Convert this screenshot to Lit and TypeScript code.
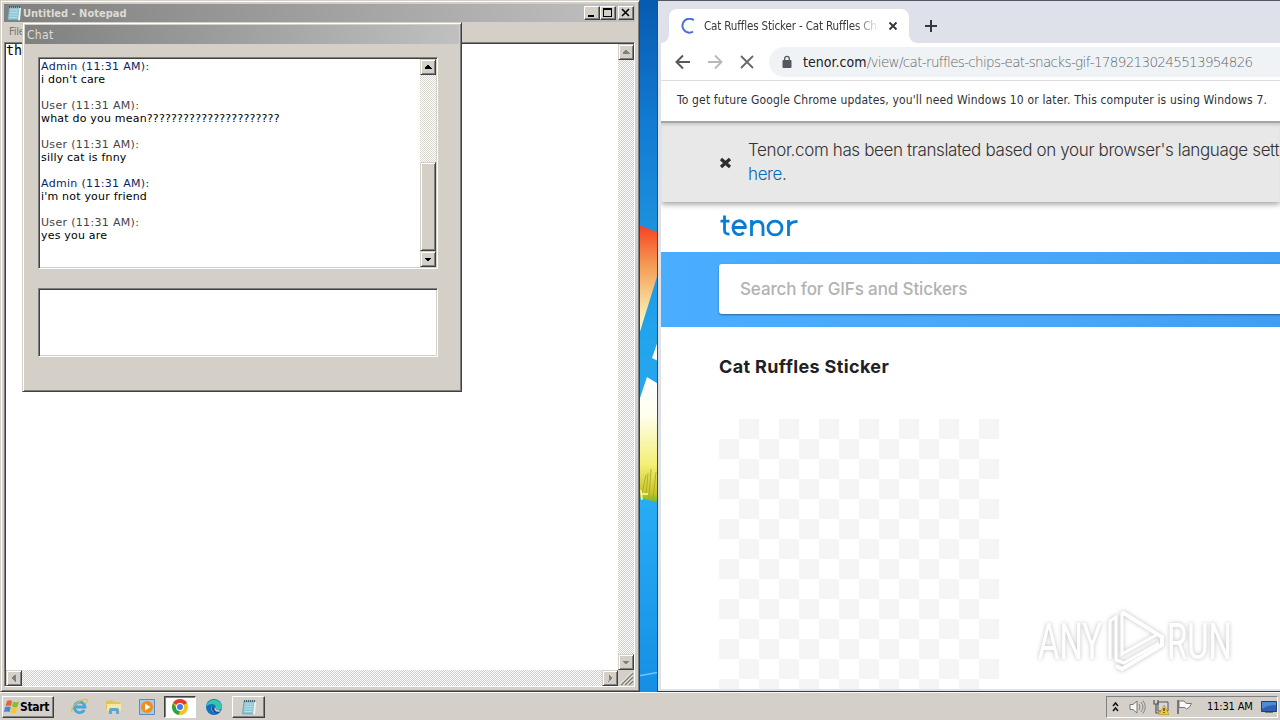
import { LitElement, html, css, svg } from "lit";
import { customElement, property } from "lit/decorators.js";

const arrows: Record<string, string> = {
  up: "M4 9h7L7.500 5z",
  down: "M4 6h7L7.500 10z",
  left: "M9 4v7L5 7.500z",
  right: "M6 4v7L10 7.500z",
};

@customElement("classic-button")
class ClassicButton extends LitElement {
  @property() dir = "up";
  @property({ type: Boolean }) off = false;
  static styles = css`
    :host { display: block; width: 16px; height: 16px; flex: none; box-sizing: border-box; background: #d4d0c8;
      border: 1px solid; border-color: #d4d0c8 #404040 #404040 #d4d0c8; box-shadow: inset 1px 1px #fff, inset -1px -1px #808080; }
    svg { display: block; width: 14px; height: 14px; }
    .on { fill: #000; }
    .dim { fill: #848078; }
  `;
  render() {
    return html`<svg viewBox="0.5 0.5 14 14" shape-rendering="crispEdges"><path class=${this.off ? "dim" : "on"} d=${arrows[this.dir]}></path></svg>`;
  }
}

@customElement("chat-window")
class ChatWindow extends LitElement {
  static styles = css`
    :host { display: flex; flex-direction: column; box-sizing: border-box; background: #d4d0c8; padding: 2px;
      border: 1px solid; border-color: #d4d0c8 #404040 #404040 #d4d0c8; box-shadow: inset 1px 1px #fff, inset -1px -1px #808080;
      font-family: "DejaVu Sans", sans-serif; }
    .title { height: 19px; box-sizing: border-box; flex: none; background: linear-gradient(90deg, #808080, #c0c0c0); color: #dedbd5; padding: 1px 0 0 2px;
      font: 12px/18px "DejaVu Sans Condensed", "DejaVu Sans", sans-serif; letter-spacing: 0.3px; }
    .body { padding: 13px 21px 32px 13px; flex: 1; display: flex; flex-direction: column; gap: 19px; }
    .well { background: #fff; border: 1px solid; border-color: #808080 #fff #fff #808080; box-shadow: inset 1px 1px #404040, inset -1px -1px #d4d0c8; box-sizing: border-box; }
    .log { height: 212px; display: flex; padding: 1px; }
    .text { flex: 1; padding: 1px 0 0 1px; font-size: 11px; line-height: 13px; color: #000; }
    .msg { margin-bottom: 13px; white-space: nowrap; }
    .who { color: #444; letter-spacing: 0.32px; }
    .admin { color: #0a1f66; }
    .said { letter-spacing: 0.2px; }
    .bar { width: 16px; display: flex; flex-direction: column; background: repeating-conic-gradient(#d8d4ce 0 25%, #fff 0 50%) 0 0/2px 2px; }
    .space { flex: 1; }
    .thumb { height: 89px; box-sizing: border-box; background: #d4d0c8; border: 1px solid; border-color: #d4d0c8 #404040 #404040 #d4d0c8; box-shadow: inset 1px 1px #fff, inset -1px -1px #808080; }
    .entry { height: 69px; }
  `;
  messages = [
    ["Admin", "i don't care"],
    ["User", "what do you mean??????????????????????"],
    ["User", "silly cat is fnny"],
    ["Admin", "i'm not your friend"],
    ["User", "yes you are"],
  ];
  render() {
    return html`<div class="title">Chat</div>
      <div class="body">
        <div class="well log">
          <div class="text">${this.messages.map(([who, text]) => html`<div class="msg">
            <div class="who ${who === "Admin" ? "admin" : ""}">${who} (11:31 AM):</div>
            <div class="said">${text}</div></div>`)}</div>
          <div class="bar"><classic-button dir="up"></classic-button><div class="space"></div><div class="thumb"></div><classic-button dir="down"></classic-button></div>
        </div>
        <div class="well entry"></div>
      </div>`;
  }
}

const notepadIcon = html`<svg width="16" height="16" viewBox="0 0 16 16"><path d="M3 2h11l-1.500 13H1.500z" fill="#8dc6d4" stroke="#5c8c98" stroke-width=".6"></path><path d="M13.500 2.500L15 3l-1 12-2 .5z" fill="#f2f6f2"></path><path d="M4 5h8M3.800 7.500h8M3.500 10h8M3.200 12.500h8" stroke="#c5e6ec" stroke-width=".8"></path><path d="M3.500 1v2M5.500 1v2M7.500 1v2M9.500 1v2M11.500 1v2M13.500 1v2" stroke="#45555a" stroke-width=".9"></path></svg>`;

@customElement("notepad-window")
class NotepadWindow extends LitElement {
  static styles = css`
    :host { display: flex; flex-direction: column; box-sizing: border-box; background: #d4d0c8; padding: 3px 4px 4px 3px;
      border: 1px solid; border-color: #d4d0c8 #404040 #404040 #d4d0c8; box-shadow: inset 1px 1px #fff, inset -1px -1px #808080; }
    .title { height: 18px; flex: none; display: flex; align-items: center; background: linear-gradient(90deg, #808080, #c0c0c0); color: #dedbd5;
      font: bold 11px "DejaVu Sans Condensed", "DejaVu Sans", sans-serif; padding: 0 1px 0 2px; }
    .name { margin-left: 1px; letter-spacing: 0; flex: 1; }
    .ctl { width: 16px; height: 14px; box-sizing: border-box; background: #d4d0c8; border: 1px solid; border-color: #fff #404040 #404040 #fff; box-shadow: inset -1px -1px #808080; }
    .ctl svg { display: block; }
    .gap { margin-left: 2px; }
    .menu { height: 20px; flex: none; font: 11px/20px "DejaVu Sans Condensed", "DejaVu Sans", sans-serif; color: #75736f; padding-left: 5px; letter-spacing: -0.2px; }
    .edit { flex: 1; display: grid; grid-template: 1fr 16px / 1fr 16px; background: #fff; border: 1px solid; border-color: #808080 #fff #fff #808080; box-shadow: inset 1px 1px #404040; padding: 1px 0 0 1px; }
    .paper { padding: 0; font: 13.300px/14px "DejaVu Sans Mono", monospace; }
    .vbar, .hbar { display: flex; justify-content: space-between; background: repeating-conic-gradient(#d0cdc6 0 25%, #fff 0 50%) 0 0/2px 2px; }
    .vbar { flex-direction: column; }
    .grip { background: #d4d0c8; }
  `;
  render() {
    return html`<div class="title">${notepadIcon}<span class="name">Untitled - Notepad</span>
        <div class="ctl"><svg width="14" height="12" shape-rendering="crispEdges"><path d="M3 8h6v2H3z"></path></svg></div>
        <div class="ctl"><svg width="14" height="12" shape-rendering="crispEdges"><path d="M2 1h9v9H2zM3 3v6h7V3z" fill-rule="evenodd"></path></svg></div>
        <div class="ctl gap"><svg width="14" height="12"><path d="M3 2l7 7M10 2l-7 7" stroke="#000" stroke-width="1.600"></path></svg></div>
      </div>
      <div class="menu">File</div>
      <div class="edit">
        <div class="paper">th</div>
        <div class="vbar"><classic-button dir="up" off></classic-button><classic-button dir="down" off></classic-button></div>
        <div class="hbar"><classic-button dir="left" off></classic-button><classic-button dir="right" off></classic-button></div>
        <div class="grip"><svg width="16" height="16"><path d="M3 15L15 3M7 15l8-8M11 15l4-4" stroke="#807c74" stroke-width="1.600"></path><path d="M2 14.500L14.500 2M6 14.500L14.500 6M10 14.500l4.500-4.500" stroke="#fff" stroke-width=".8"></path></svg></div>
      </div>`;
  }
}

@customElement("chrome-window")
class ChromeWindow extends LitElement {
  static styles = css`
    :host { display: flex; flex-direction: column; box-sizing: border-box; border-left: 1px solid #3c4a5c; border-top: 1px solid #555766; border-bottom: 1px solid #383a48; padding-left: 3px; padding-bottom: 2px; background: #dee1e6; overflow: hidden; white-space: nowrap; font-family: "Noto Sans", sans-serif; }
    svg { flex: none; }
    .strip { height: 42px; flex: none; display: flex; align-items: flex-end; padding-left: 8px; background: #dee1ea; }
    .tab { position: relative; width: 240px; height: 34px; box-sizing: border-box; background: #fff; border-radius: 8px 8px 0 0; display: flex; align-items: center; padding: 0 10px 0 12px; }
    .tab::before { content: ""; position: absolute; left: -8px; bottom: 0; width: 8px; height: 8px; background: radial-gradient(circle at 0 0, transparent 7.500px, #fff 8px); }
    .tab::after { content: ""; position: absolute; right: -8px; bottom: 0; width: 8px; height: 8px; background: radial-gradient(circle at 100% 0, transparent 7.500px, #fff 8px); }
    .name { width: 175px; overflow: hidden; margin-left: 7px; font: 11.500px/16px "DejaVu Sans Condensed", sans-serif; letter-spacing: -0.15px; color: #36383c; -webkit-mask-image: linear-gradient(90deg, #000 86%, transparent); }
    .close { margin-left: 9px; }
    .plus { margin: 0 0 10px 15px; }
    .tools { height: 38px; flex: none; display: flex; align-items: center; background: #fff; padding-left: 14px; border-bottom: 1px solid #dcdcdc; box-sizing: border-box; }
    .fwd, .stop { margin-left: 16px; }
    .url { flex: 1; height: 30px; margin-left: 14px; border-radius: 15px 0 0 15px; background: #f0f3f5; display: flex; align-items: center; padding-left: 12px; }
    .host { color: #202124; margin-left: 10px; font: 14px/30px "DejaVu Sans Condensed", sans-serif; letter-spacing: 0.05px; }
    .path { font: 200 13.500px/30px "DejaVu Sans", sans-serif; letter-spacing: -0.66px; color: #63666a; }
    .info { height: 40px; flex: none; background: #fff; color: #303236; font: 12px/39px "DejaVu Sans Condensed", sans-serif; letter-spacing: 0.16px; padding-left: 16px; }
    .page { flex: 1; min-height: 0; background: #fff; color: #202124; font-family: Inter, sans-serif; display: flex; flex-direction: column; overflow: hidden; }
    .banner { height: 81px; flex: none; box-sizing: border-box; background: #e8e8e8; border-top: 2px solid #a5a5a5; box-shadow: 0 2px 6px rgba(0,0,0,.4), inset 0 3px 3px -1px rgba(0,0,0,.12); display: flex; align-items: center; padding-left: 58px; position: relative; }
    .notice { margin: -1px 0 0 16px; font-size: 17px; line-height: 24px; font-weight: 300; letter-spacing: -0.37px; color: #333; }
    .link { color: #0b69b5; }
    .brand { height: 50px; flex: none; padding-left: 58px; display: flex; align-items: center; }
    .search { height: 75px; box-sizing: border-box; flex: none; background: linear-gradient(90deg, #4aadff, #48a6f8 70%, #3f9df3); padding: 12px 0 13px 58px; }
    .field { height: 50px; background: #fff; border-radius: 3px 0 0 3px; box-shadow: 0 1px 2px rgba(0,0,0,.4); padding-left: 21px; font-size: 17px; line-height: 50px; font-weight: 500; letter-spacing: -0.12px; color: #b2b2b2; }
    .heading { margin: 28px 0 0 58px; font-size: 18px; line-height: 24px; font-weight: 700; letter-spacing: 0.37px; }
    .sheet { margin: 40px 0 0 58px; width: 280px; flex: 1; background: repeating-conic-gradient(#f5f5f5 0 25%, #fff 0 50%) 0 0/40px 40px; }
  `;
  render() {
    return html`<div class="strip">
        <div class="tab">
          <svg width="16" height="16" viewBox="0 0 16 16"><path d="M12.800 2.200A7 7 0 1 0 12 13.700" fill="none" stroke="#4a6fd8" stroke-width="2"></path></svg>
          <span class="name">Cat Ruffles Sticker - Cat Ruffles Chips</span>
          <svg class="close" width="10" height="10"><path d="M1.500 1.500l7 7M8.500 1.500l-7 7" stroke="#333539" stroke-width="1.800"></path></svg>
        </div>
        <svg class="plus" width="14" height="14"><path d="M7 1v12M1 7h12" stroke="#35373b" stroke-width="2"></path></svg>
      </div>
      <div class="tools">
        <svg width="16" height="16" viewBox="0 0 16 16"><path d="M15 8H2M8 1.500L1.500 8 8 14.500" fill="none" stroke="#56595d" stroke-width="2"></path></svg>
        <svg class="fwd" width="16" height="16" viewBox="0 0 16 16"><path d="M1 8h13M8 1.500L14.500 8 8 14.500" fill="none" stroke="#b7b8ba" stroke-width="1.800"></path></svg>
        <svg class="stop" width="16" height="16" viewBox="0 0 16 16"><path d="M2 2l12 12M14 2L2 14" fill="none" stroke="#66686c" stroke-width="1.800"></path></svg>
        <div class="url"><svg width="12" height="14" viewBox="0 0 12 14"><path d="M2.500 5h7a1 1 0 0 1 1 1v6a1 1 0 0 1-1 1h-7a1 1 0 0 1-1-1V6a1 1 0 0 1 1-1z" fill="#55585c"></path><path d="M3.700 6V3.700a2.300 2.300 0 0 1 4.600 0V6" fill="none" stroke="#55585c" stroke-width="1.300"></path></svg>
        <span class="host">tenor.com</span><span class="path">/view/cat-ruffles-chips-eat-snacks-gif-17892130245513954826</span></div>
      </div>
      <div class="info">To get future Google Chrome updates, you'll need Windows 10 or later. This computer is using Windows 7.</div>
      <div class="page">
        <div class="banner"><svg width="13" height="12" viewBox="0 0 13 12"><path d="M2 2l9 8M11 2l-9 8" stroke="#2d2d2d" stroke-width="3.300"></path></svg>
          <p class="notice">Tenor.com has been translated based on your browser's language sett<br><span class="link">here</span>.</p></div>
        <div class="brand"><svg width="80" height="30" viewBox="0 0 80 30" aria-label="tenor"><g fill="none" stroke="#077ed3" stroke-width="2.800" stroke-linejoin="round"><path d="M5.500 3.500v14.500q0 4.500 5 4M1.500 9.200h9"></path><path d="M14 15.500h12.500a6.300 6.900 0 1 0-1.800 5"></path><path d="M32.500 24V8M32.500 14.500q1.500-5 6-5 5.500 0 5.500 6V24"></path><ellipse cx="56" cy="16" rx="7" ry="6.900"></ellipse><path d="M69.500 24V8M69.500 15q1.500-5.700 9-5.500"></path></g></svg></div>
        <div class="search"><div class="field">Search for GIFs and Stickers</div></div>
        <div class="heading">Cat Ruffles Sticker</div>
        <div class="sheet"></div>
      </div>`;
  }
}

@customElement("task-bar")
class TaskBar extends LitElement {
  static styles = css`
    :host { display: flex; box-sizing: border-box; background: #d4cfc8; border-top: 1px solid #fbfaf8; padding: 2px 2px 2px 2px; align-items: center; font-family: "DejaVu Sans Condensed", sans-serif; }
    .raised { border: 1px solid; border-color: #fff #404040 #404040 #fff; box-shadow: inset -1px -1px #808080; box-sizing: border-box; height: 22px; }
    .start { width: 52px; display: flex; align-items: center; font-weight: bold; font-size: 12px; letter-spacing: -0.35px; padding-left: 1px; }
    .apps { display: flex; align-items: center; margin-left: 8px; flex: 1; }
    .app { width: 34px; height: 22px; box-sizing: border-box; display: flex; align-items: center; justify-content: center; }
    .active { width: 32px; background: #fff; border: 1px solid; border-color: #404040 #fff #fff #404040; box-shadow: inset 1px 1px #808080; }
    .edge { width: 36px; }
    .note { width: 33px; }
    .tray { width: 172px; height: 22px; box-sizing: border-box; border: 1px solid; border-color: #808080 #fff #fff #808080; display: flex; align-items: center; padding-left: 4px; font-size: 11px; }
    .i1 { margin-left: 9px; }
    .i2 { margin-left: 7px; }
    .i3 { margin-left: 7px; }
    .clock { margin-left: 14px; letter-spacing: -0.15px; white-space: nowrap; width: 47px; }
    .desk { margin-left: 7px; }
  `;
  render() {
    return html`<div class="raised start"><svg width="16" height="16" viewBox="0 0 16 16"><path d="M3 2q2.500-1.500 5 0L7 7Q4.500 6 1.500 7z" fill="#ed6035"></path><path d="M9 2.500q2.500 1.500 6 0L13.500 8Q10.500 9 8 7.500z" fill="#88bd3c"></path><path d="M1.200 8q3-1 5.600 0L5.500 13Q3 12 0 13z" fill="#4289cc"></path><path d="M7.800 8.500q2.600 1.500 5.500.3L12 14q-3 1-5.500-.5z" fill="#f9c535"></path></svg><span>Start</span></div>
      <div class="apps">
        <div class="app"><svg width="17" height="17" viewBox="0 0 17 17"><path d="M13.300 12A5.300 5.300 0 1 1 14 9H5" fill="none" stroke="#42a7dc" stroke-width="2.800"></path><path d="M1 14.500C-1 9 10 0 16 1.500q1 2-2 4.500" fill="none" stroke="#e1bd42" stroke-width="1.200"></path></svg></div>
        <div class="app"><svg width="17" height="17" viewBox="0 0 17 17"><path d="M1 3l6-1 2 2h6v8H1z" fill="#e2c35e"></path><path d="M2 6h14v7H2z" fill="#f6e7a3"></path><path d="M4 16v-4q0-2 2-2h6q2 0 2 2v4h-3v-3H7v3z" fill="#5aa8d6"></path></svg></div>
        <div class="app"><svg width="16" height="16" viewBox="0 0 16 16"><path d="M.5.500h15v15H.5z" fill="#a9c8e3" stroke="#5b8cb9"></path><circle cx="8" cy="8" r="6" fill="#f28c1d"></circle><path d="M6 4.500L11.500 8 6 11.500z" fill="#fff"></path></svg></div>
        <div class="app active"><svg width="16" height="16" viewBox="0 0 16 16"><circle cx="8" cy="8" r="8" fill="#fbc116"></circle><path d="M8 8L1.100 4A8 8 0 0 1 14.900 4z" fill="#e33b2e"></path><path d="M1.100 4L5 10l3 2-1.500 3.900A8 8 0 0 1 1.100 4z" fill="#2ba24c"></path><circle cx="8" cy="8" r="4" fill="#fff"></circle><circle cx="8" cy="8" r="3" fill="#3d7de8"></circle></svg></div>
        <div class="app edge"><svg width="16" height="16" viewBox="0 0 16 16"><circle cx="8" cy="8" r="8" fill="#1270c4"></circle><path d="M.2 7.500A8 8 0 0 1 16 7.500q0 3.500-4 3.500-3 0-2-2.500Q9.500 5 6 5 2 5 .2 7.500z" fill="#35c5b2"></path><path d="M6 7q-2 3 1 6 4 2 8-1l-3-1q-3 0-2.300-2.500z" fill="#d4cfc8"></path><path d="M6 7q-2 5 4 7.500 3 0 4.500-2-4 1-5.500-1T9 8z" fill="#17509d"></path></svg></div>
        <div class="app raised note">${notepadIcon}</div>
      </div>
      <div class="tray">
        <svg width="9" height="12" viewBox="0 0 9 12"><path d="M2 5l2.500-3L7 5M2 10l2.500-3L7 10" fill="none" stroke="#111" stroke-width="1.500"></path></svg>
        <svg class="i1" width="17" height="16" viewBox="0 0 17 16"><path d="M1 5.500h3L8 2v12l-4-3.500H1z" fill="#f8f8f8" stroke="#777"></path><path d="M10 5q2 3 0 6M12 3q4 5 0 10M14 1.500q4.500 6.500 0 13" fill="none" stroke="#888"></path></svg>
        <svg class="i2" width="16" height="16" viewBox="0 0 16 16"><path d="M5 3h10v9H5z" fill="#d7d7d7" stroke="#555"></path><path d="M1 1v4h4V1M3 5v9h3" fill="none" stroke="#555" stroke-width="1.200"></path><path d="M11 6l5 9.500H6z" fill="#f4cb29" stroke="#bb981c" stroke-width=".7"></path><path d="M11 9v3M11 13v1" stroke="#333" stroke-width="1.300"></path></svg>
        <svg class="i3" width="17" height="16" viewBox="0 0 17 16"><path d="M2 1v14" stroke="#777" stroke-width="2"></path><path d="M3 2h5q1 2 3 2.500h4.500Q14 9 10.500 10 9 8.500 8 8.500H3z" fill="#fafafa" stroke="#777"></path></svg>
        <span class="clock">11:31 AM</span>
        <svg class="desk" width="16" height="14" viewBox="0 0 16 14"><path d="M.5 1.500h15v10H.5z" fill="#2c61b3" stroke="#203e75"></path><path d="M1 2h14v3Q6 5 1 9z" fill="#508ad1"></path><path d="M4 12.500h8" stroke="#777"></path></svg>
      </div>`;
  }
}

@customElement("app-root")
class AppRoot extends LitElement {
  static styles = css`
    :host { display: flex; flex-direction: column; justify-content: flex-end; width: 1280px; height: 720px; position: relative; overflow: hidden; background: #1a86dc; }
    .wall { position: absolute; left: 638px; top: 0; }
    notepad-window { position: absolute; left: 0; top: 0; width: 640px; height: 692px; }
    chat-window { position: absolute; left: 22px; top: 22px; width: 440px; height: 370px; }
    chrome-window { position: absolute; left: 657px; top: 0; width: 623px; height: 692px; }
    task-bar { height: 28px; }
    .mark { position: absolute; left: 1030px; top: 600px; filter: drop-shadow(0 0 2px rgba(0,0,0,.26)); }
  `;
  render() {
    return html`
      <svg class="wall" width="22" height="692" viewBox="638 0 22 692">
        <defs><linearGradient id="sky" x1="0" y1="0" x2="0" y2="1"><stop offset="0" stop-color="#075bb0"></stop><stop offset=".18" stop-color="#127bd2"></stop><stop offset=".33" stop-color="#1c91dd"></stop><stop offset=".48" stop-color="#22a4ec"></stop><stop offset=".72" stop-color="#28adf5"></stop><stop offset="1" stop-color="#158fe5"></stop></linearGradient>
        <linearGradient id="red" x1="0" y1="0" x2="0" y2="1"><stop offset="0" stop-color="#f93f20"></stop><stop offset=".35" stop-color="#f49a53"></stop><stop offset=".75" stop-color="#fae5a5"></stop><stop offset="1" stop-color="#fffbe0"></stop></linearGradient>
        <linearGradient id="yel" x1="0" y1="0" x2="0" y2="1"><stop offset="0" stop-color="#fff"></stop><stop offset=".3" stop-color="#fffff0"></stop><stop offset=".7" stop-color="#f4ee72"></stop><stop offset=".92" stop-color="#c6c62a"></stop><stop offset="1" stop-color="#70b52a"></stop></linearGradient></defs>
        <path d="M638 0h22v692h-22z" fill="url(#sky)"></path>
        <path d="M638 225l22 8v34l-22 71z" fill="url(#red)"></path>
        <path d="M660 335v27l-8-4z" fill="#fff"></path>
        <path d="M638 404l9-27 13 8v118l-20-5h-2z" fill="url(#yel)"></path>
        <path d="M642 493l4-18M646 495l2-22M649 497l2-28M653 498l3-26" stroke="#a9a51d" stroke-width=".8"></path>
        <path d="M641 490l1 10M642 494h6" stroke="#fffbb0" stroke-width="1.500"></path>
        <path d="M638 676l22-4" stroke="#71c6fa" stroke-width="1.500"></path>
      </svg>
      <notepad-window></notepad-window>
      <chat-window></chat-window>
      <chrome-window></chrome-window>
      <svg class="mark" width="210" height="80" viewBox="1030 600 210 80">
        <g fill="#fff" font-family="Roboto, sans-serif" font-size="33" font-weight="400"><text transform="translate(1038 659) scale(1 1.500)" textLength="64" lengthAdjust="spacingAndGlyphs">ANY</text><text transform="translate(1167 659) scale(1 1.500)" textLength="65" lengthAdjust="spacingAndGlyphs">RUN</text></g>
        <g fill="none" stroke="#fff" stroke-width="4"><path d="M1122 612l40 25v8l-40 24-6-3"></path><path d="M1122 612v42l36-20M1110 659v-38l6-4v43l8 3 35-20" stroke-width="3"></path></g>
      </svg>
      <task-bar></task-bar>`;
  }
}
